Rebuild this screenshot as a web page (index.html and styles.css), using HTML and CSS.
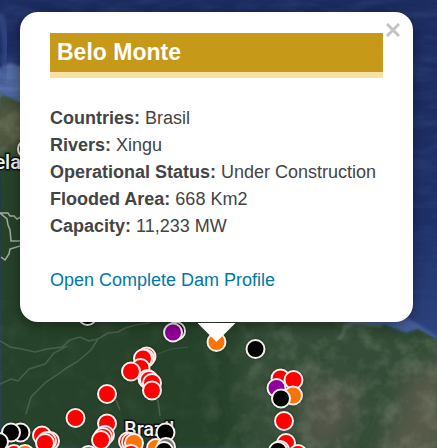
FILE: index.html
```
<!DOCTYPE html>
<html lang="en">
<head>
<meta charset="utf-8">
<meta name="viewport" content="width=device-width, initial-scale=1">
<title>Belo Monte</title>
<link rel="stylesheet" href="styles.css">
</head>
<body>
<main class="map">
  <svg class="map-canvas" viewBox="0 0 437 448" preserveAspectRatio="xMidYMin slice" aria-hidden="true">
    <defs>
      <filter id="soft" x="-30%" y="-30%" width="160%" height="160%"><feGaussianBlur stdDeviation="11"/></filter>
      <filter id="coast" x="-10%" y="-10%" width="120%" height="120%"><feGaussianBlur stdDeviation="1.5"/></filter>
      <filter id="grain" x="0" y="0" width="100%" height="100%">
        <feTurbulence type="fractalNoise" baseFrequency="0.05" numOctaves="5" seed="8"/>
        <feColorMatrix values="0 0 0 0 0.48  0 0 0 0 0.5  0 0 0 0 0.4  1.4 0 0 0 -0.6"/>
      </filter>
      <filter id="waves" x="0" y="0" width="100%" height="100%">
        <feTurbulence type="fractalNoise" baseFrequency="0.03 0.11" numOctaves="4" seed="3"/>
        <feColorMatrix values="0 0 0 0 0.03  0 0 0 0 0.06  0 0 0 0 0.2  1.8 0 0 0 -0.7"/>
      </filter>
      <linearGradient id="sea" x1="0" y1="0" x2="0" y2="1">
        <stop offset="0" stop-color="#1c2b60"/>
        <stop offset="0.5" stop-color="#1e3069"/>
        <stop offset="0.75" stop-color="#2c437f"/>
      </linearGradient>
      <linearGradient id="east" x1="0" y1="0" x2="1" y2="0">
        <stop offset="0" stop-color="#000"/>
        <stop offset="0.35" stop-color="#fff"/>
      </linearGradient>
      <mask id="east-fade"><rect x="190" y="300" width="247" height="148" fill="url(#east)"/></mask>
      <clipPath id="land-clip"><path d="M0 94L20 102L80 160L250 260L338 320L352 324L385 325L406 333L418 329L437 340V448H0Z"/></clipPath>
    </defs>
    <rect width="437" height="448" fill="url(#sea)"/>
    <path d="M-5 72L10 62L24 68V108H-5Z" fill="#5871a9" filter="url(#coast)"/>
    <path d="M0 14Q12 50 0 84" stroke="#3e5794" stroke-width="7" fill="none" opacity=".55" filter="url(#coast)"/>
    <rect width="437" height="330" filter="url(#waves)" opacity=".6"/>
    <path d="M345 318H408L437 336V346L400 334L345 328Z" fill="#465f9c" filter="url(#coast)"/>
    <path d="M0 94L20 102L80 160L250 260L338 320L352 324L385 325L406 333L418 329L437 340V448H0Z" fill="#26422c" filter="url(#coast)"/>
    <g clip-path="url(#land-clip)">
      <path d="M-20 100H40V152H-20Z" fill="#535a41" filter="url(#soft)"/>
      <path d="M250 310L350 322L460 342V470H250L236 380Z" fill="#344e39" filter="url(#soft)"/>
      <path d="M300 384L345 380L360 410L335 448H305Z" fill="#52574a" filter="url(#soft)"/>
      <path d="M405 380L450 356V460H378L400 410Z" fill="#565a4a" filter="url(#soft)"/>
      <g mask="url(#east-fade)">
        <rect x="190" y="310" width="247" height="138" filter="url(#grain)" opacity=".4"/>
      </g>
      <rect y="90" width="30" height="80" filter="url(#grain)" opacity=".5"/>
      <rect y="300" width="230" height="148" filter="url(#grain)" opacity=".1"/>
    </g>
    <g fill="none" stroke="#718270" stroke-width="1.5" opacity=".45">
      <path d="M0 341L10 347L22 349L35 352L47 349L62 347L70 340L80 337L89 341L98 339L108 333L118 332L125 328L136 325L150 323"/>
      <path d="M0 384L11 379L18 381L29 369L45 364L54 353L67 346"/>
      <path d="M98 339L91 350L77 362L68 367L57 375L46 382L31 397L26 414"/>
      <path d="M147 392L158 401L160 416M115 398L120 410"/>
    </g>
    <path d="M155 355L171 349L188 347" fill="none" stroke="#5a6b59" stroke-width="1" opacity=".5"/>
    <path d="M337 339L342 337L345 327L354 322L371 325L382 326" fill="none" stroke="#6a7b75" stroke-width="3" opacity=".6" filter="url(#coast)"/>
    <g fill="none" stroke="#a4aca3" stroke-width="1.5">
      <path d="M0 213H8L10 216L14 216L17 219L21 217M0 213L7 219L8 225L10 230L11 241H20"/>
      <path d="M20 246L10 249L9 254L5 260L1 257"/>
    </g>
    <g class="place">
      <text x="21" y="169" text-anchor="end">Venezuela</text>
      <text x="124" y="436">Brazil</text>
    </g>
    <g class="markers">
      <circle class="none" cx="27" cy="149" r="9"/>
      <circle class="black" cx="87.500" cy="316" r="9"/>
      <circle class="black" cx="176" cy="331" r="9"/>
      <circle class="purple" cx="173" cy="332.500" r="9"/>
      <circle class="orange" cx="216.500" cy="342" r="9"/>
      <circle class="black" cx="255.500" cy="349" r="9"/>
      <circle class="red" cx="146.500" cy="356.500" r="9"/>
      <circle class="red" cx="145" cy="358.500" r="9"/>
      <circle class="red" cx="143" cy="358.500" r="9"/>
      <circle class="red" cx="140.500" cy="368" r="9"/>
      <circle class="red" cx="131" cy="371.500" r="9"/>
      <circle class="red" cx="147.500" cy="379" r="9"/>
      <circle class="red" cx="149" cy="380" r="9"/>
      <circle class="red" cx="152" cy="383" r="9"/>
      <circle class="red" cx="152" cy="390.500" r="9"/>
      <circle class="red" cx="107" cy="394" r="9"/>
      <circle class="red" cx="75.500" cy="418" r="9"/>
      <circle class="red" cx="107" cy="423.500" r="9"/>
      <circle class="red" cx="105" cy="435" r="9"/>
      <circle class="red" cx="103" cy="437" r="9"/>
      <circle class="red" cx="101" cy="440" r="9"/>
      <circle class="red" cx="280.500" cy="378.500" r="9"/>
      <circle class="red" cx="293.500" cy="380" r="9"/>
      <circle class="purple" cx="276.500" cy="388" r="9"/>
      <circle class="orange" cx="293" cy="395.500" r="9"/>
      <circle class="black" cx="281" cy="398.500" r="9"/>
      <circle class="red" cx="284" cy="421" r="9"/>
      <circle class="red" cx="286" cy="443" r="9"/>
      <circle class="gray" cx="280" cy="450" r="9"/>
      <circle class="black" cx="278" cy="451" r="9"/>
      <circle class="red" cx="298" cy="454" r="9"/>
      <circle class="black" cx="20.500" cy="432.500" r="9"/>
      <circle class="black" cx="11" cy="432.500" r="9"/>
      <circle class="black" cx="-1" cy="442" r="9"/>
      <circle class="red" cx="14" cy="454" r="9"/>
      <circle class="orange" cx="25" cy="454" r="9"/>
      <circle class="red" cx="42" cy="435.500" r="9"/>
      <circle class="red" cx="50" cy="441" r="9"/>
      <circle class="red" cx="47" cy="441" r="9"/>
      <circle class="red" cx="45" cy="443" r="9"/>
      <circle class="gray" cx="88.500" cy="455" r="9"/>
      <circle class="red" cx="128" cy="441.500" r="9"/>
      <circle class="red" cx="131" cy="442" r="9"/>
      <circle class="orange" cx="134" cy="443" r="9"/>
      <circle class="red" cx="131" cy="454" r="9"/>
      <circle class="orange" cx="156" cy="448" r="9"/>
      <circle class="black" cx="165.500" cy="432.500" r="9"/>
      <circle class="gray" cx="166" cy="447" r="9"/>
      <circle class="black" cx="164" cy="451" r="9"/>
    </g>
  </svg>

  <article class="popup">
    <button class="close" type="button" aria-label="Close">
      <svg viewBox="0 0 14 14" aria-hidden="true"><path d="M1 1L13 13M13 1L1 13"/></svg>
    </button>
    <h1 class="title">Belo Monte</h1>
    <dl class="facts">
      <div><dt>Countries:</dt> <dd>Brasil</dd></div>
      <div><dt>Rivers:</dt> <dd>Xingu</dd></div>
      <div><dt>Operational Status:</dt> <dd>Under Construction</dd></div>
      <div><dt>Flooded Area:</dt> <dd>668 Km2</dd></div>
      <div><dt>Capacity:</dt> <dd>11,233 MW</dd></div>
    </dl>
    <a class="profile" href="#profile">Open Complete Dam Profile</a>
  </article>
</main>
</body>
</html>
```
FILE: styles.css
```
* {
  box-sizing: border-box;
}

body {
  margin: 0;
  color: #444;
  font: 18px/27px "Liberation Sans", Arial, sans-serif;
}

.map {
  position: relative;
  min-height: 100vh;
  padding: 12px 24px 24px 20px;
  overflow: hidden;
  background: #26422c;
}

.map-canvas {
  position: absolute;
  inset: 0;
  width: 100%;
  height: 100%;
}

.place {
  fill: #f2f2f2;
  stroke: #111;
  stroke-width: 3px;
  paint-order: stroke;
  font: 500 20px Roboto, sans-serif;
}

.markers {
  stroke: #f6f1ee;
  stroke-width: 2px;
  filter: drop-shadow(0 0 1px #0008);
}

.red { fill: #f00; }
.black { fill: #000; }
.orange { fill: #f97306; }
.purple { fill: #90009a; }
.gray { fill: #777; }
.none { fill: #333; }

.popup {
  position: relative;
  padding: 21px 30px 28px;
  border-radius: 18px;
  background: #fff;
  box-shadow: 0 3px 14px #0006;
}

.popup::after {
  content: "";
  position: absolute;
  top: calc(100% + 1px);
  left: 50%;
  width: 38px;
  height: 19px;
  background: #fff;
  clip-path: polygon(0 0, 100% 0, 50% 100%);
  transform: translateX(-50%);
}

.close {
  position: absolute;
  top: 8px;
  right: 10px;
  display: grid;
  place-items: center;
  width: 20px;
  height: 20px;
  padding: 0;
  border: 0;
  background: none;
  cursor: pointer;
}

.close svg {
  width: 14px;
  height: 14px;
  fill: none;
  stroke: #c3c3c3;
  stroke-width: 3px;
}

.title {
  margin: 0 0 27px;
  padding: 0 7px;
  border-bottom: 6px solid #f6e1a6;
  background: #c69a18;
  color: #fff;
  font-size: 23px;
  line-height: 39px;
}

.facts {
  margin: 0 0 27px;
}

.facts dt,
.facts dd {
  display: inline;
  margin: 0;
}

.facts dt {
  font-weight: 700;
}

.profile {
  display: block;
  color: #0078a8;
  text-decoration: none;
}
```
